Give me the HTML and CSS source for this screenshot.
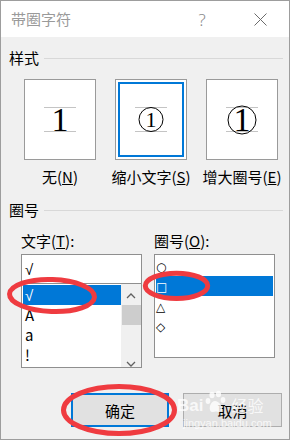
FILE: index.html
```html
<!DOCTYPE html>
<html lang="zh-CN">
<head>
<meta charset="utf-8">
<title>带圈字符</title>
<link rel="stylesheet" href="styles.css">
</head>
<body>
<div class="window">
  <div class="titlebar">
    <div class="title">带圈字符</div>
    <div class="tb-btn help">?</div>
    <div class="tb-btn close">
      <svg width="13" height="13" viewBox="0 0 13 13"><path d="M0.5 0.5L12.5 12.5M12.5 0.5L0.5 12.5" stroke="#6b6b6b" stroke-width="1" fill="none"/></svg>
    </div>
  </div>
  <div class="content">
    <div class="group-head"><span>样式</span><div class="rule"></div></div>
    <div class="styles">
      <div class="style-item">
        <div class="sbox">
          <svg width="70" height="79" viewBox="0 0 70 79">
            <line x1="19" y1="27.5" x2="51" y2="27.5" stroke="#c4c4c4"/>
            <line x1="19" y1="51.5" x2="51" y2="51.5" stroke="#c4c4c4"/>
            <text x="35" y="51" class="digit big" text-anchor="middle">1</text>
          </svg>
        </div>
        <div class="slabel">无(<u>N</u>)</div>
      </div>
      <div class="style-item">
        <div class="sbox selected">
          <svg width="70" height="79" viewBox="0 0 70 79">
            <line x1="19" y1="27.5" x2="51" y2="27.5" stroke="#c4c4c4"/>
            <line x1="19" y1="51.5" x2="51" y2="51.5" stroke="#c4c4c4"/>
            <circle cx="35" cy="39.5" r="12" stroke="#000" fill="none"/>
            <text x="35" y="47" class="digit small" text-anchor="middle">1</text>
          </svg>
        </div>
        <div class="slabel">缩小文字(<u>S</u>)</div>
      </div>
      <div class="style-item">
        <div class="sbox">
          <svg width="70" height="79" viewBox="0 0 70 79">
            <line x1="19" y1="27.5" x2="51" y2="27.5" stroke="#c4c4c4"/>
            <line x1="19" y1="51.5" x2="51" y2="51.5" stroke="#c4c4c4"/>
            <circle cx="35" cy="40" r="14" stroke="#000" fill="none"/>
            <text x="35" y="51" class="digit big" text-anchor="middle">1</text>
          </svg>
        </div>
        <div class="slabel">增大圈号(<u>E</u>)</div>
      </div>
    </div>
    <div class="group-head second"><span>圈号</span><div class="rule"></div></div>
    <div class="fields">
      <div class="field">
        <div class="flabel">文字(<u>T</u>):</div>
        <div class="edit"><span class="check">√</span></div>
        <div class="list combo">
          <div class="rows">
            <div class="row sel"><span class="check">√</span></div>
            <div class="row">A</div>
            <div class="row">a</div>
            <div class="row">!</div>
          </div>
          <div class="scrollbar">
            <svg class="arrow" width="10" height="6" viewBox="0 0 10 6"><path d="M1 5L5 1L9 5" stroke="#606060" stroke-width="1.3" fill="none"/></svg>
            <div class="thumb"></div>
            <div class="track"></div>
            <svg class="arrow" width="10" height="6" viewBox="0 0 10 6"><path d="M1 1L5 5L9 1" stroke="#606060" stroke-width="1.3" fill="none"/></svg>
          </div>
        </div>
      </div>
      <div class="field">
        <div class="flabel">圈号(<u>O</u>):</div>
        <div class="list plain">
          <div class="row sym">○</div>
          <div class="row sym sel">□</div>
          <div class="row sym">△</div>
          <div class="row sym">◇</div>
        </div>
      </div>
    </div>
    <div class="buttons">
      <div class="btn default">确定</div>
      <div class="btn">取消</div>
    </div>
  </div>
  <div class="watermark">
    <div class="wm-main">
      <span class="wm-bai">Bai</span>
      <svg class="paw" width="22" height="24" viewBox="0 0 22 24">
        <ellipse cx="7" cy="5" rx="2.6" ry="3.3" fill="#fff"/>
        <ellipse cx="13.5" cy="4" rx="2.6" ry="3.3" fill="#fff"/>
        <ellipse cx="3" cy="11" rx="2.4" ry="3" fill="#fff"/>
        <ellipse cx="18" cy="10" rx="2.4" ry="3" fill="#fff"/>
        <path d="M10 11C6 11 4 17 5 20C6 23 9 22 11 21.5C13 22 16 23 17 20C18 17 14 11 10 11Z" fill="#fff"/>
      </svg>
      <span class="wm-jy">经验</span>
    </div>
    <div class="wm-url">jingyan.baidu.com</div>
  </div>
  <svg class="marks" width="290" height="440" viewBox="0 0 290 440">
    <ellipse cx="52" cy="295.5" rx="42.5" ry="16" transform="rotate(2 52 295.5)"/>
    <ellipse cx="176.5" cy="285.8" rx="31.2" ry="12.6"/>
    <ellipse cx="119" cy="410" rx="55.5" ry="23.5"/>
  </svg>
</div>
</body>
</html>
```

FILE: styles.css
```css
html, body {
  margin: 0;
  padding: 0;
  background: #ffffff;
}

body {
  font-family: "Noto Sans CJK SC", "Noto Sans", sans-serif;
  font-size: 15px;
  color: #000;
}

.window {
  position: relative;
  width: 290px;
  height: 440px;
  box-sizing: border-box;
  border: 1px solid #9d9d9d;
  background: #f0f0f0;
  overflow: hidden;
}

.titlebar {
  height: 36px;
  background: #ffffff;
  display: flex;
  align-items: center;
}

.title {
  flex: 1;
  padding-left: 10px;
  color: #9a9a9a;
  font-size: 15px;
  line-height: 20px;
}

.tb-btn {
  width: 58px;
  height: 36px;
  display: flex;
  align-items: center;
  justify-content: center;
}

.help {
  color: #8a8a8a;
  font-family: "Noto Sans", sans-serif;
  font-weight: 300;
  font-size: 17px;
  padding-top: 1px;
  box-sizing: border-box;
}

.close svg {
  display: block;
}

.content {
  padding: 0 6px 0 8px;
}

.group-head {
  display: flex;
  align-items: center;
  height: 20px;
  line-height: 20px;
  margin-top: 11px;
}

.group-head.second {
  margin-top: 13px;
}

.rule {
  flex: 1;
  height: 1px;
  background: #d8d8d8;
  margin-left: 5px;
}

.styles {
  display: flex;
  gap: 19px;
  margin-left: 15px;
  margin-top: 11px;
}

.style-item {
  width: 72px;
  display: flex;
  flex-direction: column;
  align-items: center;
}

.sbox {
  width: 72px;
  height: 81px;
  box-sizing: border-box;
  border: 1px solid #9a9a9a;
  background: #ffffff;
}

.sbox svg {
  display: block;
}

.sbox.selected {
  box-shadow: inset 0 0 0 2px #ffffff, inset 0 0 0 4px #0078d7;
}

.digit {
  font-family: "Liberation Serif", serif;
  fill: #000;
}

.digit.big {
  font-size: 34px;
}

.digit.small {
  font-size: 22px;
}

.slabel {
  margin-top: 7px;
  line-height: 20px;
  white-space: nowrap;
}

.fields {
  display: flex;
  gap: 12px;
  margin-left: 12px;
  margin-top: 12px;
}

.field {
  width: 121px;
}

.flabel {
  line-height: 18px;
  height: 18px;
  margin-bottom: 4px;
  white-space: nowrap;
}

.edit {
  height: 30px;
  box-sizing: border-box;
  border: 1px solid #8f8f8f;
  background: #ffffff;
  padding-left: 3px;
  line-height: 28px;
}

.check {
  font-family: "Liberation Sans", sans-serif;
  font-size: 15px;
}

.list {
  background: #ffffff;
  box-sizing: border-box;
  border: 1px solid #8f8f8f;
}

.list.combo {
  height: 84px;
  border-top: none;
  display: flex;
  padding: 1px 0 0 1px;
}

.list.plain {
  height: 104px;
  padding: 1px;
}

.rows {
  flex: 1;
}

.row {
  height: 20px;
  line-height: 20px;
  padding-left: 2px;
}

.row.sel {
  background: #0078d7;
  color: #ffffff;
}

.row.sym {
  font-family: "DejaVu Sans", sans-serif;
  font-size: 12px;
  font-weight: bold;
  padding-left: 0;
  line-height: 23px;
}

.scrollbar {
  width: 20px;
  margin-top: -1px;
  background: #f0f0f0;
  display: flex;
  flex-direction: column;
  align-items: center;
}

.arrow {
  display: block;
  margin: 9px 0 6px;
}

.scrollbar .arrow:last-child {
  margin: 6px 0 0;
}

.thumb {
  width: 19px;
  height: 20px;
  background: #cdcdcd;
}

.track {
  flex: 1;
}

.buttons {
  display: flex;
  justify-content: flex-end;
  gap: 14px;
  margin-top: 25px;
  margin-right: 1px;
}

.btn {
  width: 99px;
  height: 34px;
  box-sizing: border-box;
  border: 1px solid #adadad;
  background: #e1e1e1;
  display: flex;
  align-items: center;
  justify-content: center;
}

.btn.default {
  width: 98px;
  border: 2px solid #0078d7;
}

.watermark {
  position: absolute;
  left: 176px;
  top: 385px;
  color: rgba(255, 255, 255, 0.8);
  pointer-events: none;
}

.wm-main {
  display: flex;
  align-items: flex-end;
  height: 28px;
}

.wm-bai {
  font-family: "Liberation Sans", sans-serif;
  font-weight: bold;
  font-size: 17px;
  line-height: 17px;
}

.paw {
  opacity: 0.8;
  margin: 0 4px 0 2px;
}

.wm-jy {
  font-size: 16px;
  line-height: 18px;
}

.wm-url {
  font-family: "Liberation Sans", sans-serif;
  font-size: 11px;
  line-height: 12px;
  margin-left: 6px;
  margin-top: 3px;
}

.marks {
  position: absolute;
  left: -1px;
  top: -1px;
  pointer-events: none;
}

.marks ellipse {
  fill: none;
  stroke: #ef3b40;
  stroke-width: 5;
}
```
